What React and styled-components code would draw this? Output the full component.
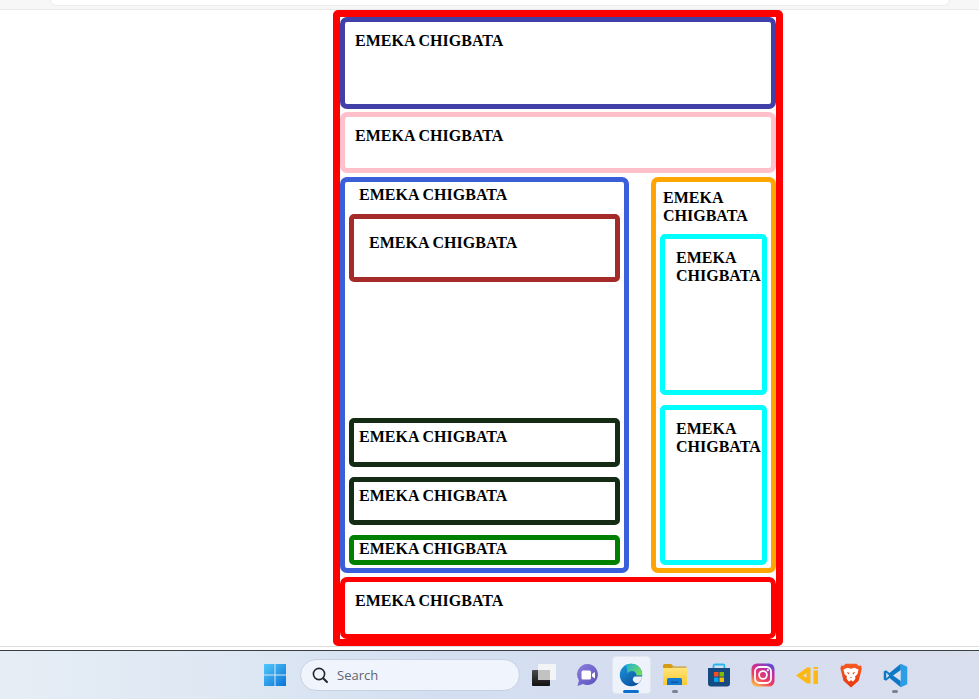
import React from 'react';
import styled, { createGlobalStyle } from 'styled-components';

const Global = createGlobalStyle`
  html, body {
    margin: 0;
    padding: 0;
    height: 100%;
    overflow: hidden;
    background: #fff;
  }
  * { box-sizing: border-box; }
`;

const LABEL = 'EMEKA CHIGBATA';

const App = () => {
  return (
    <>
      <Global />
      <Page>
        <BrowserEdge>
          <BrowserPanel />
        </BrowserEdge>
        <Main>
          <Frame>
            <Banner $color="#4040a8" $height={91.7}>{LABEL}</Banner>
            <Banner $color="pink" $height={61.5}>{LABEL}</Banner>
            <Columns>
              <LeftColumn>
                <ColumnTitle $indent={10}>{LABEL}</ColumnTitle>
                <Hero>{LABEL}</Hero>
                <Item $color="#142b14" $height={49} $top={136} $pad={5}>{LABEL}</Item>
                <Item $color="#142b14" $height={48} $top={10} $pad={5}>{LABEL}</Item>
                <Item $color="green" $height={30} $top={10} $pad={0}>{LABEL}</Item>
              </LeftColumn>
              <RightColumn>
                <ColumnTitle $indent={3}>{LABEL}</ColumnTitle>
                <SideCard $height={161} $top={9}>{LABEL}</SideCard>
                <SideCard $height={160} $top={10}>{LABEL}</SideCard>
              </RightColumn>
            </Columns>
            <Banner $color="red" $height={62}>{LABEL}</Banner>
          </Frame>
        </Main>
        <Gap />
        <Taskbar>
          <TrayIcon><WindowsLogo /></TrayIcon>
          <SearchBox>
            <SearchGlass />
            <SearchText>Search</SearchText>
          </SearchBox>
          <TrayGroup>
            <TrayIcon><TaskView /></TrayIcon>
            <TrayIcon><ChatIcon /></TrayIcon>
            <TrayIcon $active><EdgeIcon /></TrayIcon>
            <TrayIcon $running><FolderIcon /></TrayIcon>
            <TrayIcon><StoreIcon /></TrayIcon>
            <TrayIcon><InstaIcon /></TrayIcon>
            <TrayIcon><DiIcon /></TrayIcon>
            <TrayIcon><BraveIcon /></TrayIcon>
            <TrayIcon $running><CodeIcon /></TrayIcon>
          </TrayGroup>
        </Taskbar>
      </Page>
    </>
  );
};

export default App;

/* taskbar icons */
const WindowsLogo = () => (
  <svg width="24" height="24" viewBox="0 0 24 24">
    <defs>
      <linearGradient id="win" x1="0" y1="0" x2="1" y2="1">
        <stop offset="0" stopColor="#52c8fb" />
        <stop offset="1" stopColor="#0a74d6" />
      </linearGradient>
    </defs>
    <path fill="url(#win)" d="M1 1h10.5v10.5H1zM12.5 1H23v10.5H12.5zM1 12.5h10.5V23H1zM12.5 12.5H23V23H12.5z" />
  </svg>
);

const SearchGlass = () => (
  <svg width="18" height="18" viewBox="0 0 18 18" fill="none" stroke="#23262b" strokeWidth="1.6" strokeLinecap="round">
    <circle cx="8" cy="8" r="5.6" />
    <path d="M12.2 12.2L16 16" strokeWidth="2" />
  </svg>
);

const TaskView = () => (
  <svg width="26" height="24" viewBox="0 0 26 24">
    <defs>
      <linearGradient id="tv" x1="0" y1="0" x2="0" y2="1">
        <stop offset="0" stopColor="#4a4a4a" />
        <stop offset="1" stopColor="#111" />
      </linearGradient>
    </defs>
    <rect x="2" y="7" width="18" height="16" rx="1" fill="url(#tv)" />
    <rect x="8" y="1" width="18" height="16" rx="1" fill="#f6f6f6" fillOpacity="0.9" />
    <rect x="8" y="7" width="12" height="10" fill="#c2c2c2" />
  </svg>
);

const ChatIcon = () => (
  <svg width="24" height="24" viewBox="0 0 24 24">
    <defs>
      <linearGradient id="chat" x1="0" y1="0" x2="1" y2="1">
        <stop offset="0" stopColor="#8f7fe0" />
        <stop offset="1" stopColor="#5a4fb8" />
      </linearGradient>
    </defs>
    <path fill="url(#chat)" d="M12.5 1a10.5 10.5 0 1 1-4.6 20l-5.4 2 1.4-5.6A10.5 10.5 0 0 1 12.5 1z" />
    <rect x="6.500" y="7.500" width="9.500" height="9" rx="1.600" fill="#fff" />
    <path fill="#fff" d="M17 11l3-2v6.500l-3-2z" />
  </svg>
);

const EdgeIcon = () => (
  <svg width="24" height="24" viewBox="0 0 24 24">
    <defs>
      <linearGradient id="edgeTop" x1="0" y1="0" x2="1" y2="0.6">
        <stop offset="0" stopColor="#1fb0d8" />
        <stop offset="1" stopColor="#6fdc5e" />
      </linearGradient>
      <linearGradient id="edgeBody" x1="0" y1="0" x2="0.7" y2="1">
        <stop offset="0" stopColor="#1c9ae0" />
        <stop offset="1" stopColor="#0b4f9e" />
      </linearGradient>
    </defs>
    <circle cx="12" cy="12" r="11.200" fill="url(#edgeBody)" />
    <path fill="url(#edgeTop)" d="M7 2C10 .5 14 .3 17 1.800c4 1.800 6.200 6 6.200 10.700h-5.700c0-2.500-2-4.500-4.500-4.500-2 0-4 1-5 2.500C8.500 7 8 4.500 7 2z" />
    <path fill="#eef2fb" d="M23.200 13.500c-.4 2.500-1.700 5-3.700 6.500-2.500.5-5-.5-5.700-3-.3-1.500.7-2.700 1.700-3.500z" />
  </svg>
);

const FolderIcon = () => (
  <svg width="26" height="24" viewBox="0 0 26 24">
    <defs>
      <linearGradient id="folder" x1="0" y1="0" x2="0" y2="1">
        <stop offset="0" stopColor="#ffe47a" />
        <stop offset="1" stopColor="#fbc92f" />
      </linearGradient>
    </defs>
    <path fill="#d79a16" d="M1 2.500A1.500 1.500 0 0 1 2.500 1H9l3 2.500h12V7H1z" />
    <path fill="url(#folder)" d="M1 5h24v17H1z" />
    <path fill="#c9c08c" d="M10 3.500h15V5H10z" opacity="0.6" />
    <path fill="#1479d0" d="M5 16.500A1.500 1.500 0 0 1 6.500 15h12a1.500 1.500 0 0 1 1.500 1.500V22H5z" />
    <path fill="#0c5aa6" d="M9 18.500h7V20H9z" />
  </svg>
);

const StoreIcon = () => (
  <svg width="24" height="24" viewBox="0 0 24 24">
    <path fill="none" stroke="#2cb6ee" strokeWidth="1.800" d="M6.500 8V3a1.500 1.500 0 0 1 1.500-1.500h8A1.500 1.500 0 0 1 17.500 3v5" />
    <path fill="#164a80" d="M1 5h22v15.500a3 3 0 0 1-3 3H4a3 3 0 0 1-3-3z" />
    <path fill="#f25022" d="M7 9h4.500v4.500H7z" />
    <path fill="#7fba00" d="M12.500 9H17v4.500h-4.500z" />
    <path fill="#00a4ef" d="M7 14.500h4.500V19H7z" />
    <path fill="#ffb900" d="M12.500 14.500H17V19h-4.500z" />
  </svg>
);

const InstaIcon = () => (
  <svg width="24" height="24" viewBox="0 0 24 24">
    <defs>
      <linearGradient id="insta" x1="0.2" y1="1" x2="0.8" y2="0">
        <stop offset="0" stopColor="#fdb84a" />
        <stop offset="0.35" stopColor="#ee3d5f" />
        <stop offset="0.7" stopColor="#c42e9f" />
        <stop offset="1" stopColor="#5a4fd0" />
      </linearGradient>
    </defs>
    <rect x="0.500" y="0.500" width="23" height="23" rx="5.500" fill="url(#insta)" />
    <rect x="4" y="4" width="16" height="16" rx="4.500" fill="none" stroke="#fff" strokeWidth="1.800" />
    <circle cx="12" cy="12" r="3.900" fill="none" stroke="#fff" strokeWidth="1.800" />
    <circle cx="16.800" cy="7.200" r="1.100" fill="#fff" />
  </svg>
);

const DiIcon = () => (
  <svg width="22" height="17" viewBox="0 0 22 17" fill="#fcb814">
    <path fillRule="evenodd" d="M0 8.500L11 .5h3.500v16H11zM7 8.500l3.500 2.300V6.200z" />
    <path d="M17.500 3.500H22V17h-4.500zM17.500 0H22v2h-4.500z" />
  </svg>
);

const BraveIcon = () => (
  <svg width="22" height="25" viewBox="0 0 22 25">
    <defs>
      <linearGradient id="brave" x1="0" y1="0" x2="0" y2="1">
        <stop offset="0" stopColor="#f75a22" />
        <stop offset="1" stopColor="#e8370f" />
      </linearGradient>
    </defs>
    <path fill="url(#brave)" d="M5.500.800h11l2 2 2.500-.2.800 3-1.300 5.200-1.800 7L11 24.500l-7.500-6.700-1.800-7L.4 5.600l.8-3 2.300.2z" />
    <path fill="#fff" d="M3.500 6.500l4-1.700 3.500 1 3.500-1 4 1.700-1 4.500-2.500 2.500.5 2-2.300 3-2.200-.8-2.200.8-2.300-3 .5-2L4.500 11z" />
    <path fill="#f0481a" d="M6.500 9l3 .8-.6 1.700zM15.500 9l-3 .8.6 1.700zM10 14h2l-1 1.200zM10.500 17h1v2h-1z" />
  </svg>
);

const CodeIcon = () => (
  <svg width="25" height="25" viewBox="0 0 100 100">
    <path fill="#0d78c6" fillRule="evenodd" d="M71 3v25L40 50l31 22v25L26 60 12 71l-9-5V34l9-5 14 11zM13 38v24l12-12z" />
    <path fill="#2a9fe8" d="M71 3l26 12v70L71 97z" />
  </svg>
);

/* page */
const Page = styled.div`
  display: flex;
  flex-direction: column;
  height: 699px;
  width: 979px;
  overflow: hidden;
`;

const BrowserEdge = styled.div`
  height: 10px;
  flex: none;
  background: #f7f7f7;
  border-bottom: 1px solid #e9e9e9;
  padding: 0 29px 0 50px;
`;

const BrowserPanel = styled.div`
  height: 6px;
  background: #fff;
  border: 1px solid #ececec;
  border-top: none;
  border-radius: 0 0 8px 8px;
`;

const Main = styled.main`
  height: 637px;
  flex: none;
  background: #fff;
  border-bottom: 1px solid #dcdcdc;
  padding-left: 333px;
`;

const Frame = styled.div`
  display: flex;
  flex-direction: column;
  gap: 3.3px;
  width: 450px;
  height: 636px;
  border: 7px solid red;
  border-radius: 5px;
  font-family: "Liberation Serif", "Times New Roman", serif;
  font-size: 16px;
  font-weight: bold;
  line-height: 18px;
  color: #000;
`;

const Banner = styled.div`
  height: ${(p) => p.$height}px;
  flex: none;
  border: 5px solid ${(p) => p.$color};
  border-radius: 7px;
  padding: 10px 10px;
`;

const Columns = styled.div`
  display: flex;
  justify-content: space-between;
  height: 396.5px;
  flex: none;
`;

const LeftColumn = styled.section`
  display: flex;
  flex-direction: column;
  width: 289px;
  border: 5px solid #3a5fd8;
  border-radius: 7px;
  padding: 4px 4px 3px;
`;

const RightColumn = styled.aside`
  display: flex;
  flex-direction: column;
  width: 125px;
  border: 5px solid orange;
  border-radius: 7px;
  padding: 7px 4px 3px;
`;

const ColumnTitle = styled.div`
  padding-left: ${(p) => p.$indent}px;
`;

const Hero = styled.div`
  height: 68px;
  flex: none;
  margin-top: 10px;
  border: 5px solid brown;
  border-radius: 5px;
  padding: 15px 15px;
`;

const Item = styled.div`
  height: ${(p) => p.$height}px;
  flex: none;
  margin-top: ${(p) => p.$top}px;
  border: 5px solid ${(p) => p.$color};
  border-radius: 5px;
  padding: ${(p) => p.$pad}px 5px;
`;

const SideCard = styled.div`
  height: ${(p) => p.$height}px;
  flex: none;
  margin-top: ${(p) => p.$top}px;
  border: 5px solid cyan;
  border-radius: 5px;
  padding: 10px 0 0 11px;
`;

const Gap = styled.div`
  height: 3px;
  flex: none;
  background: #fff;
`;

const Taskbar = styled.footer`
  display: flex;
  align-items: center;
  height: 49px;
  flex: none;
  padding-left: 253px;
  border-top: 1px solid #3a3d42;
  background: linear-gradient(90deg, #e6edf5 0%, #dde7f3 25%, #d3dff1 45%, #d5ddef 70%, #dadfee 100%);
`;

const TrayGroup = styled.div`
  display: flex;
  margin-left: 1px;
`;

const TrayIcon = styled.div`
  position: relative;
  display: flex;
  align-items: center;
  justify-content: center;
  width: 44px;
  height: 38px;

  ${(p) => p.$active && `
    &::before {
      content: '';
      position: absolute;
      inset: 0 2px 0 3px;
      background: #eef2fb;
      border: 1px solid #e2e6f1;
      border-radius: 4px;
    }
    &::after {
      content: '';
      position: absolute;
      left: 14px;
      bottom: 1px;
      width: 16px;
      height: 3px;
      background: #0a6fd0;
      border-radius: 2px;
    }
  `}

  ${(p) => p.$running && `
    &::after {
      content: '';
      position: absolute;
      left: 19px;
      bottom: 1px;
      width: 6px;
      height: 3px;
      background: #7d828c;
      border-radius: 2px;
    }
  `}

  svg {
    position: relative;
  }
`;

const SearchBox = styled.div`
  display: flex;
  align-items: center;
  gap: 8px;
  width: 220px;
  height: 32px;
  margin-left: 3px;
  padding-left: 10px;
  background: #f0f4fc;
  border: 1px solid #c9d1e0;
  border-radius: 16px;
`;

const SearchText = styled.span`
  font-family: "Open Sans", "Noto Sans", sans-serif;
  font-size: 13px;
  color: #5f6470;
`;
